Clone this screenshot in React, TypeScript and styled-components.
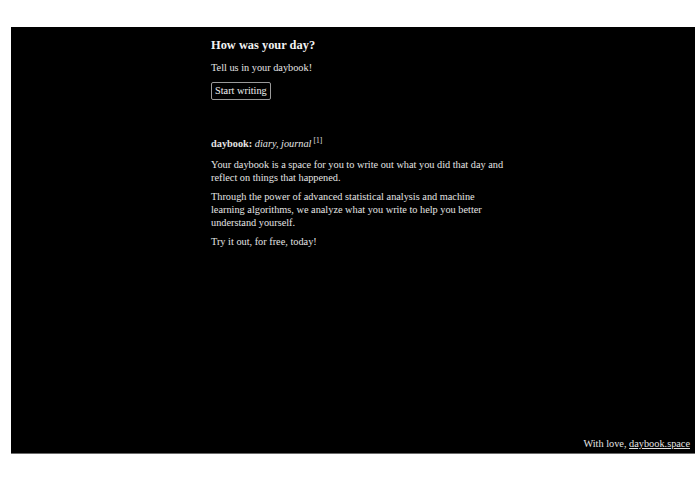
import React from "react";
import styled, { createGlobalStyle } from "styled-components";

const Global = createGlobalStyle`
  html, body { margin: 0; padding: 0; background: #ffffff; }
  body { font-family: "Liberation Serif", "DejaVu Serif", serif; }
`;

const Frame = styled.div`
  margin: 27px 0 0 11px;
  width: 684px;
  height: 427px;
  background: #000000;
  color: #e4e4e4;
  display: flex;
  flex-direction: column;
  box-sizing: border-box;
  border-bottom: 1px solid #6a6a6a;
`;

const Main = styled.main`
  flex: 1;
  width: 294px;
  margin-left: 200px;
  padding-top: 10px;
  font-size: 10.3px;
  line-height: 13px;
`;

const Title = styled.h1`
  margin: 0 0 7px;
  font-size: 12.4px;
  line-height: 17px;
  font-weight: 700;
  color: #f2f2f2;
`;

const Para = styled.p<{ $gap?: number }>`
  margin: 0 0 ${(p) => p.$gap ?? 6}px;
`;

const Strong = styled.b`
  font-weight: 700;
`;

const Button = styled.button`
  font-family: inherit;
  font-size: 10.3px;
  line-height: 13px;
  color: #f0f0f0;
  background: #000;
  border: 1px solid #9a9a9a;
  border-radius: 2px;
  padding: 1px 3px 2px;
  cursor: pointer;
`;

const About = styled.section`
  margin-top: 37px;
`;

const Sup = styled.sup`
  font-size: 7.5px;
  line-height: 0;
  margin-left: 2px;
`;

const Footer = styled.footer`
  display: flex;
  justify-content: flex-end;
  padding: 0 5px 3px 0;
  font-size: 10.3px;
  line-height: 13px;
  color: #e4e4e4;
`;

const Link = styled.a`
  color: inherit;
  text-decoration: underline;
  text-underline-offset: 1px;
`;

export default function App() {
  return (
    <>
      <Global />
      <Frame>
        <Main>
          <Title>How was your day?</Title>
          <Para $gap={8}>Tell us in your daybook!</Para>
          <Button>Start writing</Button>
          <About>
            <Para $gap={8}>
              <Strong>daybook:</Strong> <i>diary, journal</i>
              <Sup>[1]</Sup>
            </Para>
            <Para>
              Your daybook is a space for you to write out what you did that day
              and reflect on things that happened.
            </Para>
            <Para>
              Through the power of advanced statistical analysis and machine
              learning algorithms, we analyze what you write to help you better
              understand yourself.
            </Para>
            <Para>Try it out, for free, today!</Para>
          </About>
        </Main>
        <Footer>
          <span>
            With love, <Link href="#">daybook.space</Link>
          </span>
        </Footer>
      </Frame>
    </>
  );
}
